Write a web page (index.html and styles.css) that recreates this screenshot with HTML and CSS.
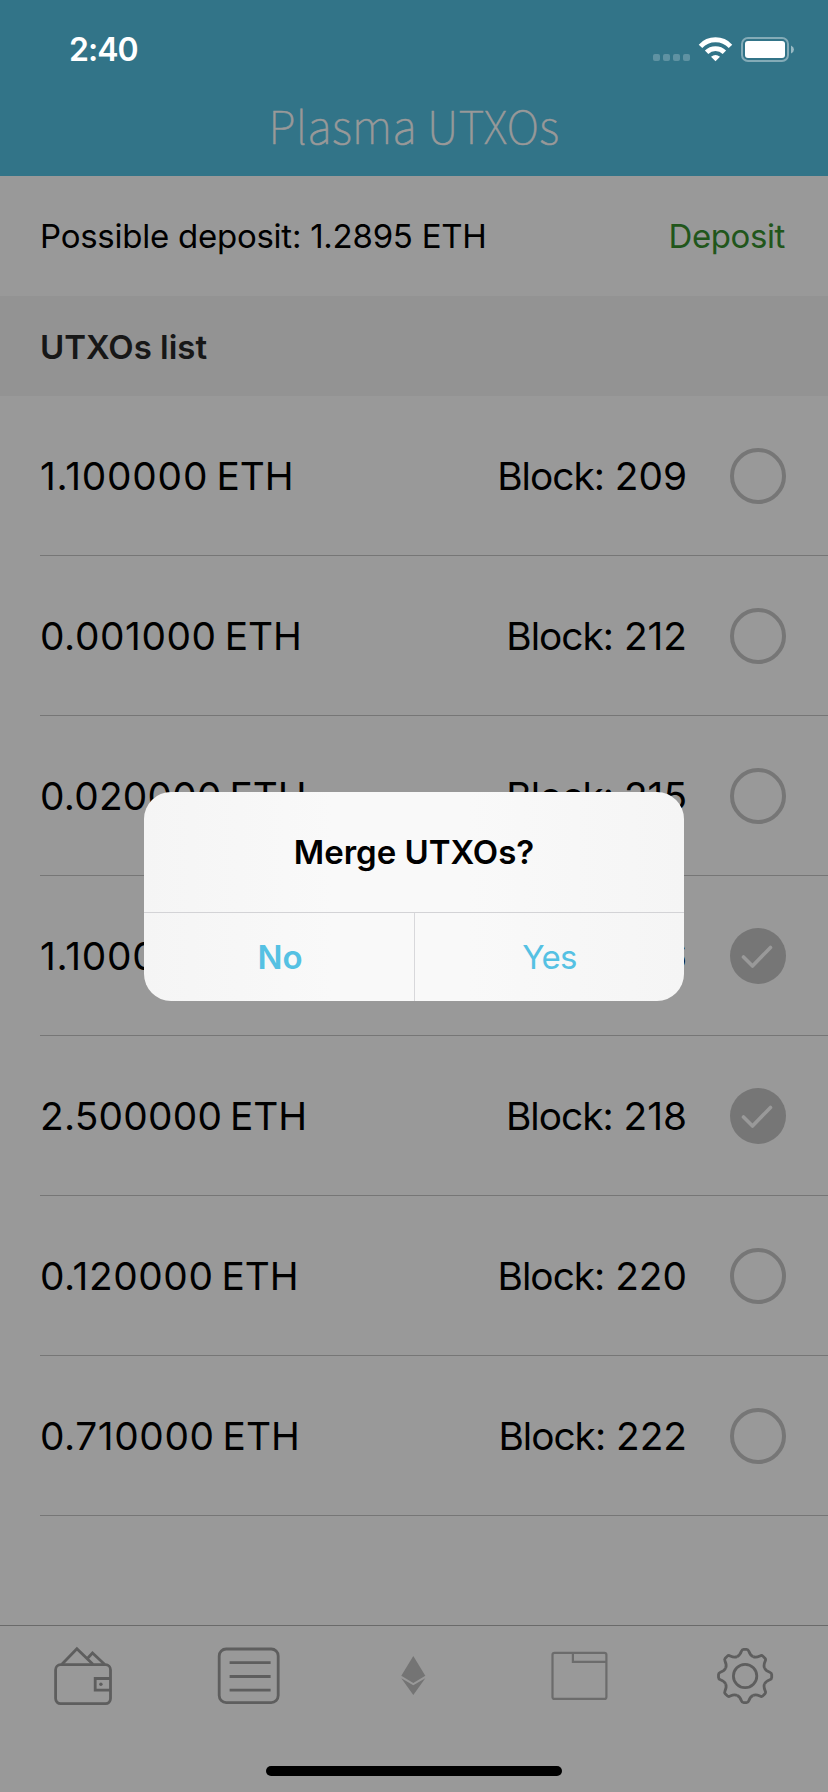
FILE: index.html
```html
<!DOCTYPE html>
<html lang="en">
<head>
<meta charset="utf-8">
<title>Plasma UTXOs</title>
<link rel="stylesheet" href="styles.css">
</head>
<body>
<div class="screen">
  <header class="top">
    <div class="status">
      <span class="time">2:40</span>
      <svg class="indicators" width="146" height="30" viewBox="0 0 146 30">
        <g fill="#fff" opacity=".22">
          <rect x="3" y="20" width="7" height="7" rx="2"/><rect x="13" y="20" width="7" height="7" rx="2"/>
          <rect x="23" y="20" width="7" height="7" rx="2"/><rect x="33" y="20" width="7" height="7" rx="2"/>
        </g>
        <g fill="none" stroke="#fff" stroke-width="4.8">
          <path d="M50.5 12.3A20.5 20.5 0 0 1 80.500 12.3"/>
          <path d="M56.600 18.300A12.500 12.500 0 0 1 74.400 18.300"/>
        </g>
        <path d="M61 22.800Q65.500 19 70 22.800L65.500 27.200Z" fill="#fff"/>
        <rect x="92" y="4" width="46" height="23" rx="6" fill="none" stroke="#fff" stroke-width="2" opacity=".4"/>
        <rect x="95" y="7" width="40" height="17" rx="3" fill="#fff"/>
        <path d="M141 11.500Q144 13 144 15.500T141 19.500Z" fill="#fff" opacity=".5"/>
      </svg>
    </div>
    <h1 class="title">Plasma UTXOs</h1>
  </header>
  <div class="deposit"><span class="possible">Possible deposit: 1.2895 ETH</span><span class="action">Deposit</span></div>
  <h2 class="section">UTXOs list</h2>
  <ul class="list">
    <li class="row"><span class="amount loose">1.100000 <span class="unit">ETH</span></span><span class="block"><span class="label">Block:</span> 209</span><i class="radio"></i></li>
    <li class="row"><span class="amount">0.001000 <span class="unit">ETH</span></span><span class="block"><span class="label">Block:</span> 212</span><i class="radio"></i></li>
    <li class="row"><span class="amount tight">0.020000 <span class="unit">ETH</span></span><span class="block"><span class="label">Block:</span> 215</span><i class="radio"></i></li>
    <li class="row"><span class="amount loose">1.100000 <span class="unit">ETH</span></span><span class="block"><span class="label">Block:</span> 216</span><svg class="check" viewBox="0 0 56 56"><circle cx="28" cy="28" r="28"/><path d="M13.500 29L22.500 38L40.500 19.500"/></svg></li>
    <li class="row"><span class="amount tight">2.500000 <span class="unit">ETH</span></span><span class="block"><span class="label">Block:</span> 218</span><svg class="check" viewBox="0 0 56 56"><circle cx="28" cy="28" r="28"/><path d="M13.500 29L22.500 38L40.500 19.500"/></svg></li>
    <li class="row"><span class="amount">0.120000 <span class="unit">ETH</span></span><span class="block"><span class="label">Block:</span> 220</span><i class="radio"></i></li>
    <li class="row"><span class="amount">0.710000 <span class="unit">ETH</span></span><span class="block"><span class="label">Block:</span> 222</span><i class="radio"></i></li>
  </ul>
  <footer class="bottom">
    <nav class="tabs">
      <svg class="icon" viewBox="0 0 64 64">
        <rect x="4.600" y="20.700" width="54.900" height="38.900" rx="5"/>
        <path d="M10.900 20.200L25.900 4.800L41.900 20.200M35.900 15L41.500 9L53.500 20.200M59.500 34.500H44.200V46.200H59.500"/>
        <circle class="solid" cx="49.900" cy="40.200" r="1.700"/>
      </svg>
      <svg class="icon" viewBox="0 0 64 64">
        <rect x="3.200" y="5" width="59" height="53.600" rx="7"/>
        <path d="M13.600 18.700H54.600M13.600 32.500H54.600M13.600 46.200H54.600"/>
      </svg>
      <svg class="icon eth" viewBox="0 0 64 64">
        <path d="M31.300 12L43.300 31.700L31.300 39L19.300 31.700Z"/><path d="M19.300 34.300L31.300 41.300L43.300 34.300L31.300 51Z"/>
      </svg>
      <svg class="icon light" viewBox="0 0 64 64">
        <rect x="4.500" y="8.800" width="53.900" height="46.100" rx="2"/><path d="M24.900 9V17.800H58"/>
      </svg>
      <svg class="icon" viewBox="0 0 64 64">
        <defs><path id="tooth" d="M-8 -19.400C-5.400 -20.500 -4.700 -22 -3.700 -24.700Q-3 -26.600 -1.500 -26.600H1.500Q3 -26.600 3.700 -24.700C4.700 -22 5.400 -20.500 8 -19.400"/></defs>
        <g transform="translate(32.100 32)">
          <circle r="11.700"/>
          <use href="#tooth"/><use href="#tooth" transform="rotate(45)"/><use href="#tooth" transform="rotate(90)"/><use href="#tooth" transform="rotate(135)"/>
          <use href="#tooth" transform="rotate(180)"/><use href="#tooth" transform="rotate(225)"/><use href="#tooth" transform="rotate(270)"/><use href="#tooth" transform="rotate(315)"/>
        </g>
      </svg>
    </nav>
    <div class="home"></div>
  </footer>
  <div class="alert">
    <div class="question">Merge UTXOs?</div>
    <div class="buttons"><span class="no">No</span><span class="yes">Yes</span></div>
  </div>
</div>
</body>
</html>
```
FILE: styles.css
```css
* { box-sizing: border-box; }
body { margin: 0; }
.screen {
  position: relative;
  display: flex;
  flex-direction: column;
  width: 828px;
  height: 1792px;
  overflow: hidden;
  background: #999;
  color: #000;
  font-family: Inter, "Liberation Sans", sans-serif;
  white-space: nowrap;
}
.top { height: 176px; background: #327488; }
.status {
  display: flex;
  justify-content: space-between;
  align-items: center;
  height: 98px;
  padding: 0 32px 0 69px;
}
.time { color: #fff; font-size: 32px; font-weight: 600; line-height: 40px; letter-spacing: -1px; padding-top: 2px; }
.title {
  margin: -1px 0 0;
  text-align: center;
  color: #999;
  font-family: "Noto Sans CJK SC", "Noto Sans", sans-serif;
  font-size: 45px;
  font-weight: 100;
  line-height: 56px;
  letter-spacing: .3px;
  -webkit-text-stroke: .6px #999;
}
.deposit {
  display: flex;
  justify-content: space-between;
  align-items: center;
  height: 120px;
  padding: 0 43px 0 40px;
  font-size: 33px;
  letter-spacing: -.25px;
}
.action { color: #21561b; letter-spacing: -.4px; }
.section {
  display: flex;
  align-items: center;
  height: 100px;
  margin: 0;
  padding: 2px 40px 0;
  background: #939393;
  color: #171717;
  font-size: 33px;
  font-weight: 600;
}
.list { margin: 0; padding: 0 0 0 40px; list-style: none; }
.row {
  display: flex;
  align-items: center;
  height: 160px;
  padding: 1px 42px 0 0;
  border-bottom: 1px solid #767676;
  font-size: 38.8px;
  line-height: 46px;
}
.amount { letter-spacing: .6px; word-spacing: -3.5px; }
.loose { letter-spacing: .8px; }
.tight { letter-spacing: .25px; }
.unit { letter-spacing: 0; }
.block { margin-left: auto; margin-right: 43px; }
.label { letter-spacing: -1px; }
.radio { width: 56px; height: 56px; border: 4px solid #767676; border-radius: 50%; }
.check { width: 56px; height: 56px; fill: #767676; }
.check path { fill: none; stroke: #999; stroke-width: 3.6; stroke-linecap: round; stroke-linejoin: round; }
.bottom {
  display: flex;
  flex-direction: column;
  justify-content: space-between;
  align-items: center;
  height: 167px;
  margin-top: auto;
  padding: 18px 0 16px;
  border-top: 1px solid #6a6a6a;
}
.tabs { display: grid; grid-template-columns: repeat(5, 1fr); width: 100%; justify-items: center; }
.icon { width: 64px; height: 64px; fill: none; stroke: #5e5e5e; stroke-width: 2.8; }
.icon .solid { fill: #5e5e5e; stroke: none; }
.light { stroke: #6c6c6c; stroke-width: 2.2; }
.eth { fill: #747474; stroke: none; }
.home { width: 296px; height: 10px; border-radius: 5px; background: #000; }
.alert {
  position: absolute;
  left: 144px;
  top: 792px;
  width: 540px;
  height: 209px;
  border-radius: 27px;
  overflow: hidden;
  background: linear-gradient(90deg, #f5f5f5, #f9f9f9 35%, #f9f9f9 60%, #f5f5f5);
  font-size: 33px;
}
.question { height: 120px; line-height: 120px; text-align: center; font-weight: 600; }
.buttons {
  display: grid;
  grid-template-columns: 1fr 1fr;
  height: 89px;
  border-top: 1px solid #d3d3d6;
  color: #55c1e3;
  line-height: 88px;
  text-align: center;
}
.no { padding-left: 2px; font-weight: 600; }
.yes { border-left: 1px solid #d8d8db; letter-spacing: -.6px; }
```
